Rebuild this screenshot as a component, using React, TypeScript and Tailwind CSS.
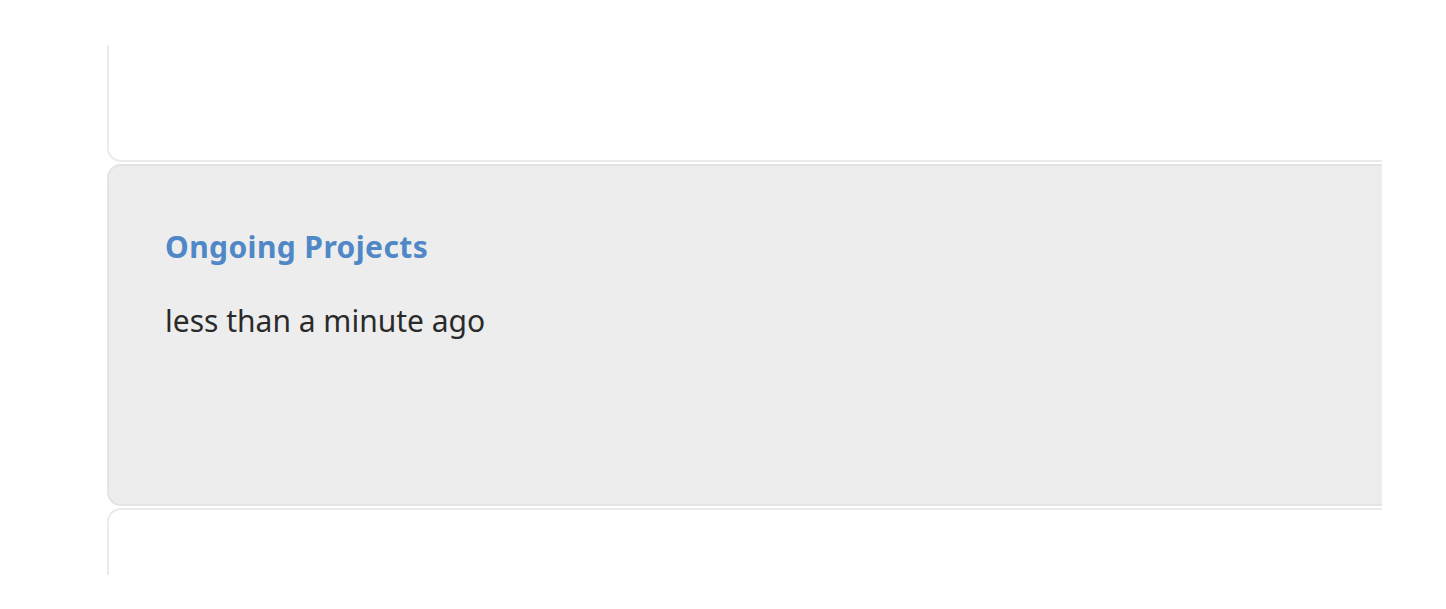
export default function App() {
  return (
    <div className="min-h-[609px] bg-white" style={{ fontFamily: '"Noto Sans", "Open Sans", sans-serif' }}>
      <div className="pt-[45px]">
        <div className="ml-[107px] h-[530px] w-[1275px] overflow-hidden">
          <div className="flex w-[1320px] flex-col gap-[2px]">
            <div className="-mt-[40px] h-[157px] rounded-b-[14px] border-x-2 border-b-2 border-[#ebebeb] bg-white" />
            <div className="h-[342px] rounded-[14px] border-2 border-[#e4e4e4] bg-[#ededed] pl-[56px] pt-[63px]">
              <h2 className="text-[30px] font-bold leading-[36px] tracking-[0.4px] text-[#4f87c7]">Ongoing Projects</h2>
              <p className="mt-[38px] text-[30px] leading-[36px] text-[#2a2a2a]">less than a minute ago</p>
            </div>
            <div className="h-[120px] rounded-t-[14px] border-x-2 border-t-2 border-[#ebebeb] bg-white" />
          </div>
        </div>
      </div>
    </div>
  );
}
